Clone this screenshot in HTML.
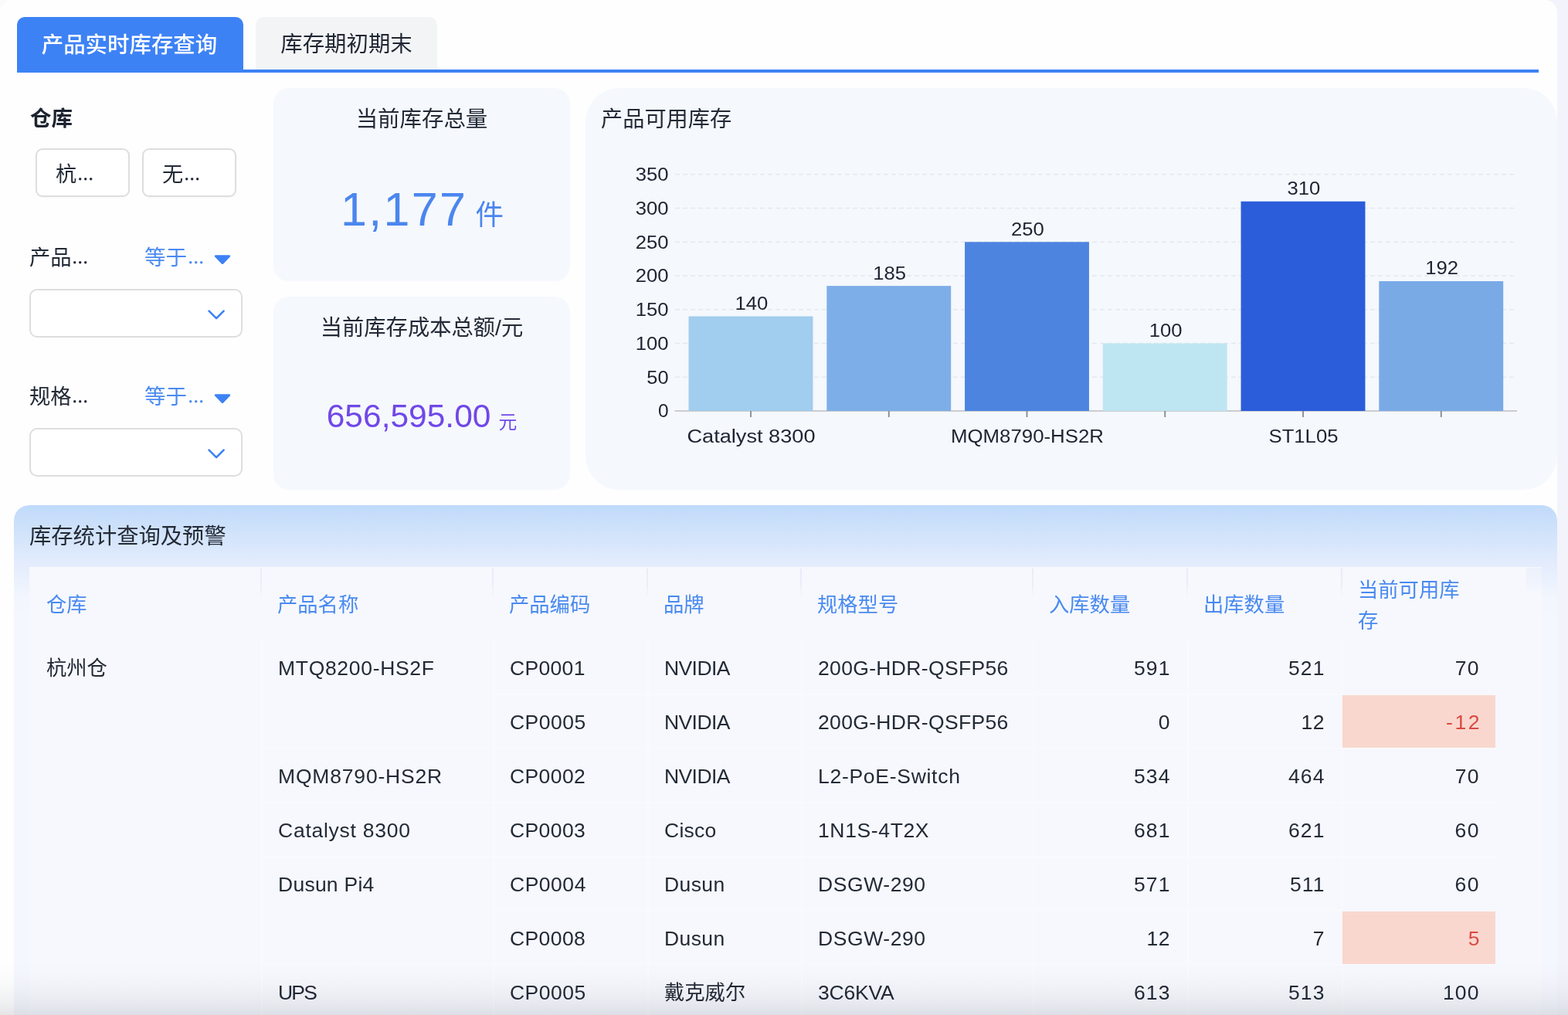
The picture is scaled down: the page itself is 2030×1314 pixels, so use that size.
<!DOCTYPE html>
<html lang="zh-CN">
<head>
<meta charset="utf-8">
<title>产品实时库存查询</title>
<style>
*{box-sizing:border-box;margin:0;padding:0}
html,body{width:2030px;height:1314px;overflow:hidden;background:#F3F4FB}
body::before{content:"";position:absolute;left:0;top:0;width:40px;height:40px;background:#FAFBFD}
body{font-family:"Liberation Sans",sans-serif;color:#1F2633;-webkit-font-smoothing:antialiased}
.page{position:absolute;left:0;top:0;width:2016px;height:1314px;background:#FEFEFF;border-radius:16px 16px 0 0;overflow:hidden;will-change:transform}
.zh{display:inline-block;vertical-align:baseline;line-height:1;white-space:nowrap;letter-spacing:0;font-family:"Liberation Sans","Noto Sans CJK SC",sans-serif;flex:none}
.tabs{position:absolute;left:0;top:0;width:2016px;height:94px}
.tab{position:absolute;top:22px;display:flex;align-items:center;justify-content:center;border-radius:10px 10px 0 0}
.tab.on{left:22px;width:293px;height:72px;background:#3D82F5;color:#fff;padding-top:1px;padding-right:2px}
.tab.off{left:331px;width:235px;height:68px;background:#F3F4F6;color:#1F2633;padding-top:2px}
.tabline{position:absolute;left:22px;top:90px;width:1970px;height:4px;background:#3D82F5}

.filters{position:absolute;left:0;top:0}
.flabel{position:absolute;line-height:28px;height:28px;white-space:nowrap;color:#1D2330}
.btn{position:absolute;top:192px;width:122px;height:63px;border:2px solid #DDDEE0;border-radius:9px;background:#fff;display:flex;align-items:center;justify-content:flex-start;padding-left:24px;padding-top:4px;white-space:nowrap;color:#232A36;box-shadow:0 1px 2px rgba(0,0,0,.03)}
.dots{display:inline-block;position:relative;fill:currentColor;vertical-align:baseline;overflow:visible}
.frow{position:absolute;left:38px;width:276px;height:30px;white-space:nowrap}
.fname{position:absolute;left:0;top:0;line-height:30px;color:#232A36}
.fop{position:absolute;left:149px;top:0;line-height:30px;color:#4A8AF0}
.caret{position:absolute;left:239px;top:9px;fill:#3D82F5}
.select{position:absolute;left:38px;width:276px;height:63px;border:2px solid #DDDEE0;border-radius:10px;background:#fff}
.chev{position:absolute;left:229px;top:24.6px;fill:none;stroke:#3D82F5;stroke-width:2.6;stroke-linecap:round;stroke-linejoin:round}

.kpi{position:absolute;left:354px;width:384px;height:250px;background:#F5F8FD;border-radius:20px}
.ktitle{position:absolute;left:0;right:0;top:26px;height:30px;line-height:30px;text-align:center;white-space:nowrap;color:#232A36}
.kval{position:absolute;left:0;right:0;white-space:nowrap;text-align:center}
.kval.blue{color:#4B86EE;top:126px;height:76px;line-height:76px;text-align:left}
.bignum{position:absolute;left:86px;top:0;fill:currentColor}
.kval.purple{color:#7048E8;top:130px;height:50px;line-height:50px}
.big{font-size:63px;letter-spacing:.9px;-webkit-text-stroke:1.1px #F5F8FD}
.mid{font-size:42.5px}

.chartcard{position:absolute;left:758px;top:114px;width:1258px;height:520px;background:#F5F8FD;border-radius:44px}
.ctitle{position:absolute;left:20px;top:26px;line-height:30px;height:30px;color:#232A36;white-space:nowrap}
.plot{position:absolute;left:0;top:0}
.plot text{font-family:"Liberation Sans",sans-serif;font-size:23.5px;fill:#1D2330}
.plot .grid{stroke:#E5E8EC;stroke-width:1.5;stroke-dasharray:6 4}
.plot .axis{stroke:#CBCCCE;stroke-width:2}
.plot .tick{stroke:#85888C;stroke-width:1.8}

.tablecard{position:absolute;left:18px;top:654px;width:1998px;height:660px;overflow:hidden;border-radius:20px 20px 0 0;background:linear-gradient(180deg,#BFDAFA 0px,#D3E4FB 40px,#E5EDFD 80px,#F2F6FD 120px,#F4F7FD 140px,#F4F7FD 100%)}
.ttitle{position:absolute;left:20px;top:26px;line-height:30px;height:30px;color:#232A36;white-space:nowrap}
.grid-tbl{position:absolute;left:20px;top:80px;width:1958px;height:580px;overflow:hidden;background:#F6F8FD}
.tr{position:relative;height:70px;width:100%}
.tr.th{height:94px;color:#4A8AF0}
.td{position:absolute;top:0;height:100%;padding:2px 22.5px 0 20px;display:flex;align-items:center;white-space:nowrap;font-size:26.5px;color:#232A36;border-left:2px solid rgba(255,255,255,.25);border-top:2px solid rgba(255,255,255,.3)}
.th .td{color:#4A8AF0;padding:4px 20px 0 19px;border-top:none;border-left-color:transparent}
.th .td::before{content:"";position:absolute;left:-3px;top:2px;width:2px;height:38px;background:linear-gradient(180deg,#E8EBF8,#EAEDF9 50%,rgba(240,243,252,0))}
.th .td.c0::before{display:none}
.td.c0{border-left:none;padding-left:22px}
.th .td.c0{padding-left:22px}
.tr .td.c0{border-top:none;padding-top:4px}
.tr.th+.tr .td,.tr.m .td.c1{border-top-color:transparent}
.tr.th .td.c0{padding-top:4px}
.td.num{justify-content:flex-end}
.td.two{display:block;padding-top:10px;line-height:40px}
.td.warn{background:#FAD7CE;color:#D94A42;border-left:none;border-top:2px solid #F6F8FD;left:1700px;width:198px;padding-right:20.5px}
.corner{position:absolute;left:1938px;top:1px;width:20px;height:32px;background:linear-gradient(180deg,#EDF1FB,#F1F4FC 60%,#F5F8FD)}
.fade{position:absolute;left:0;width:2030px;top:1244px;z-index:5;height:70px;background:linear-gradient(180deg,rgba(20,24,40,0) 0,rgba(20,24,40,.008) 25%,rgba(20,24,40,.028) 50%,rgba(20,24,40,.06) 75%,rgba(20,24,40,.105) 100%)}
.c0{left:0px;width:300px}
.c1{left:300px;width:300px}
.c2{left:600px;width:200px}
.c3{left:800px;width:199px}
.c4{left:999px;width:300px}
.c5{left:1299px;width:200px}
.c6{left:1499px;width:200px}
.c7{left:1699px;width:200px}</style>
</head>
<body>

<div class="page">
  <div class="tabs">
    <div class="tab on"><span class="zh" style="font-size:28.45px;font-weight:500">产品实时库存查询</span></div>
    <div class="tab off"><span class="zh" style="font-size:28.4px">库存期初期末</span></div>
    <div class="tabline"></div>
  </div>

  <div class="filters">
    <div class="flabel" style="left:39px;top:140px"><span class="zh" style="font-size:27.5px;font-weight:bold">仓库</span></div>
    <div class="btn" style="left:46px"><span><span class="zh" style="font-size:27.2px">杭</span><svg class="dots" aria-hidden="true" width="17.4" height="3.4" viewBox="0 0 17.4 3.4" style="margin-left:2.9px;top:-1.2px"><circle cx="1.70" cy="1.7" r="1.7"/><circle cx="8.70" cy="1.7" r="1.7"/><circle cx="15.70" cy="1.7" r="1.7"/></svg></span></div>
    <div class="btn" style="left:184px"><span><span class="zh" style="font-size:27.2px">无</span><svg class="dots" aria-hidden="true" width="17.4" height="3.4" viewBox="0 0 17.4 3.4" style="margin-left:2.9px;top:-1.2px"><circle cx="1.70" cy="1.7" r="1.7"/><circle cx="8.70" cy="1.7" r="1.7"/><circle cx="15.70" cy="1.7" r="1.7"/></svg></span></div>

    <div class="frow" style="top:320px">
      <div class="fname"><span class="zh" style="font-size:27.3px">产品</span><svg class="dots" aria-hidden="true" width="17.4" height="3.4" viewBox="0 0 17.4 3.4" style="margin-left:2.9px;top:-1.2px"><circle cx="1.70" cy="1.7" r="1.7"/><circle cx="8.70" cy="1.7" r="1.7"/><circle cx="15.70" cy="1.7" r="1.7"/></svg></div>
      <div class="fop"><span class="zh" style="font-size:27.6px">等于</span><svg class="dots" aria-hidden="true" width="17.4" height="3.4" viewBox="0 0 17.4 3.4" style="margin-left:2.9px;top:-1.2px"><circle cx="1.70" cy="1.7" r="1.7"/><circle cx="8.70" cy="1.7" r="1.7"/><circle cx="15.70" cy="1.7" r="1.7"/></svg></div>
      <svg class="caret" width="22" height="14" viewBox="0 0 22 14"><path d="M2.2 1.2h17.6a1.4 1.4 0 0 1 1 2.4l-8.6 8.8a1.7 1.7 0 0 1-2.4 0L1.2 3.6a1.4 1.4 0 0 1 1-2.4z"/></svg>
    </div>
    <div class="select" style="top:374px"><svg class="chev" width="24" height="15" viewBox="0 0 24 15"><path d="M1.6 1.6l9.5 9.5l9.5 -9.5"/></svg></div>

    <div class="frow" style="top:500px">
      <div class="fname"><span class="zh" style="font-size:27.3px">规格</span><svg class="dots" aria-hidden="true" width="17.4" height="3.4" viewBox="0 0 17.4 3.4" style="margin-left:2.9px;top:-1.2px"><circle cx="1.70" cy="1.7" r="1.7"/><circle cx="8.70" cy="1.7" r="1.7"/><circle cx="15.70" cy="1.7" r="1.7"/></svg></div>
      <div class="fop"><span class="zh" style="font-size:27.6px">等于</span><svg class="dots" aria-hidden="true" width="17.4" height="3.4" viewBox="0 0 17.4 3.4" style="margin-left:2.9px;top:-1.2px"><circle cx="1.70" cy="1.7" r="1.7"/><circle cx="8.70" cy="1.7" r="1.7"/><circle cx="15.70" cy="1.7" r="1.7"/></svg></div>
      <svg class="caret" width="22" height="14" viewBox="0 0 22 14"><path d="M2.2 1.2h17.6a1.4 1.4 0 0 1 1 2.4l-8.6 8.8a1.7 1.7 0 0 1-2.4 0L1.2 3.6a1.4 1.4 0 0 1 1-2.4z"/></svg>
    </div>
    <div class="select" style="top:554px"><svg class="chev" width="24" height="15" viewBox="0 0 24 15"><path d="M1.6 1.6l9.5 9.5l9.5 -9.5"/></svg></div>
  </div>

  <div class="kpi" style="top:114px">
    <div class="ktitle"><span class="zh" style="font-size:28.45px">当前库存总量</span></div>
    <div class="kval blue"><svg class="bignum" role="img" aria-label="1,177" width="170" height="70" viewBox="440 240 170 70"><text x="441" y="291.8" font-family="'Liberation Sans',sans-serif" font-size="61" fill="currentColor" textLength="162" lengthAdjust="spacing">1,177</text></svg><span class="zh" style="font-size:36.5px;position:absolute;left:261.5px;top:20.5px">件</span></div>
  </div>
  <div class="kpi" style="top:384px">
    <div class="ktitle"><span class="zh" style="font-size:28.3px">当前库存成本总额/元</span></div>
    <div class="kval purple"><span class="mid">656,595.00</span><span class="zh" style="font-size:23.8px;margin-left:10px;position:relative;top:1.5px">元</span></div>
  </div>

  <div class="chartcard">
    <div class="ctitle"><span class="zh" style="font-size:28.2px">产品可用库存</span></div>
    <svg class="plot" width="1258" height="520" viewBox="758 114 1258 520">
<line x1="874" x2="1962" y1="488.25" y2="488.25" class="grid"/>
<line x1="874" x2="1962" y1="444.50" y2="444.50" class="grid"/>
<line x1="874" x2="1962" y1="400.75" y2="400.75" class="grid"/>
<line x1="874" x2="1962" y1="357.00" y2="357.00" class="grid"/>
<line x1="874" x2="1962" y1="313.25" y2="313.25" class="grid"/>
<line x1="874" x2="1962" y1="269.50" y2="269.50" class="grid"/>
<line x1="874" x2="1962" y1="225.75" y2="225.75" class="grid"/>
<line x1="873.5" x2="1964" y1="532.0" y2="532.0" class="axis"/>
<rect x="891.55" y="409.50" width="160.90" height="122.50" fill="#A1CDEE"/>
<rect x="1070.30" y="370.12" width="160.90" height="161.88" fill="#7EAEE8"/>
<rect x="1249.05" y="313.25" width="160.90" height="218.75" fill="#4D84E0"/>
<rect x="1427.80" y="444.50" width="160.90" height="87.50" fill="#BEE6F2"/>
<rect x="1606.55" y="260.75" width="160.90" height="271.25" fill="#2B5CDA"/>
<rect x="1785.30" y="364.00" width="160.90" height="168.00" fill="#79AAE6"/>
<line x1="972.00" x2="972.00" y1="532.0" y2="540.0" class="tick"/>
<line x1="1150.75" x2="1150.75" y1="532.0" y2="540.0" class="tick"/>
<line x1="1329.50" x2="1329.50" y1="532.0" y2="540.0" class="tick"/>
<line x1="1508.25" x2="1508.25" y1="532.0" y2="540.0" class="tick"/>
<line x1="1687.00" x2="1687.00" y1="532.0" y2="540.0" class="tick"/>
<line x1="1865.75" x2="1865.75" y1="532.0" y2="540.0" class="tick"/>
<text x="865.5" y="540.40" text-anchor="end" textLength="13.6" lengthAdjust="spacingAndGlyphs">0</text>
<text x="865.5" y="496.65" text-anchor="end" textLength="28.2" lengthAdjust="spacingAndGlyphs">50</text>
<text x="865.5" y="452.90" text-anchor="end" textLength="42.8" lengthAdjust="spacingAndGlyphs">100</text>
<text x="865.5" y="409.15" text-anchor="end" textLength="42.8" lengthAdjust="spacingAndGlyphs">150</text>
<text x="865.5" y="365.40" text-anchor="end" textLength="42.8" lengthAdjust="spacingAndGlyphs">200</text>
<text x="865.5" y="321.65" text-anchor="end" textLength="42.8" lengthAdjust="spacingAndGlyphs">250</text>
<text x="865.5" y="277.90" text-anchor="end" textLength="42.8" lengthAdjust="spacingAndGlyphs">300</text>
<text x="865.5" y="234.15" text-anchor="end" textLength="42.8" lengthAdjust="spacingAndGlyphs">350</text>
<text x="972.80" y="400.90" text-anchor="middle" textLength="42.8" lengthAdjust="spacingAndGlyphs">140</text>
<text x="1151.55" y="361.52" text-anchor="middle" textLength="42.8" lengthAdjust="spacingAndGlyphs">185</text>
<text x="1330.30" y="304.65" text-anchor="middle" textLength="42.8" lengthAdjust="spacingAndGlyphs">250</text>
<text x="1509.05" y="435.90" text-anchor="middle" textLength="42.8" lengthAdjust="spacingAndGlyphs">100</text>
<text x="1687.80" y="252.15" text-anchor="middle" textLength="42.8" lengthAdjust="spacingAndGlyphs">310</text>
<text x="1866.55" y="355.40" text-anchor="middle" textLength="42.8" lengthAdjust="spacingAndGlyphs">192</text>
<text x="972.50" y="572.8" text-anchor="middle" textLength="166" lengthAdjust="spacingAndGlyphs">Catalyst 8300</text>
<text x="1330.00" y="572.8" text-anchor="middle" textLength="198" lengthAdjust="spacingAndGlyphs">MQM8790-HS2R</text>
<text x="1687.50" y="572.8" text-anchor="middle" textLength="90" lengthAdjust="spacingAndGlyphs">ST1L05</text>
</svg>
  </div>

  <div class="tablecard">
    <div class="ttitle"><span class="zh" style="font-size:28.3px">库存统计查询及预警</span></div>
    <div class="grid-tbl">
<div class="corner"></div>
<div class="tr th">
<div class="td c0"><span class="zh h" style="font-size:26.3px">仓库</span></div>
<div class="td c1"><span class="zh h" style="font-size:26.3px">产品名称</span></div>
<div class="td c2"><span class="zh h" style="font-size:26.3px">产品编码</span></div>
<div class="td c3"><span class="zh h" style="font-size:26.3px">品牌</span></div>
<div class="td c4"><span class="zh h" style="font-size:26.3px">规格型号</span></div>
<div class="td c5"><span class="zh h" style="font-size:26.3px">入库数量</span></div>
<div class="td c6"><span class="zh h" style="font-size:26.3px">出库数量</span></div>
<div class="td c7 two"><span class="zh h" style="font-size:26.3px">当前可用库</span><br><span class="zh h" style="font-size:26.3px">存</span></div>
</div>
<div class="tr">
<div class="td c0"><span class="zh" style="font-size:26.3px">杭州仓</span></div>
<div class="td c1"><span style="letter-spacing:0.69px;margin-right:-0.69px">MTQ8200-HS2F</span></div>
<div class="td c2"><span style="letter-spacing:0.32px;margin-right:-0.32px">CP0001</span></div>
<div class="td c3"><span style="letter-spacing:-0.60px;margin-right:0.60px">NVIDIA</span></div>
<div class="td c4"><span style="letter-spacing:0.34px;margin-right:-0.34px">200G-HDR-QSFP56</span></div>
<div class="td c5 num"><span style="letter-spacing:1.15px;margin-right:-1.15px">591</span></div>
<div class="td c6 num"><span style="letter-spacing:1.15px;margin-right:-1.15px">521</span></div>
<div class="td c7 num"><span style="letter-spacing:1.30px;margin-right:-1.30px">70</span></div>
</div>
<div class="tr m">
<div class="td c0"></div>
<div class="td c1"></div>
<div class="td c2"><span style="letter-spacing:0.48px;margin-right:-0.48px">CP0005</span></div>
<div class="td c3"><span style="letter-spacing:-0.60px;margin-right:0.60px">NVIDIA</span></div>
<div class="td c4"><span style="letter-spacing:0.34px;margin-right:-0.34px">200G-HDR-QSFP56</span></div>
<div class="td c5 num"><span style="letter-spacing:0.00px;margin-right:0.00px">0</span></div>
<div class="td c6 num"><span style="letter-spacing:0.50px;margin-right:-0.50px">12</span></div>
<div class="td c7 num warn"><span style="letter-spacing:2.60px;margin-right:-2.60px">-12</span></div>
</div>
<div class="tr">
<div class="td c0"></div>
<div class="td c1"><span style="letter-spacing:0.82px;margin-right:-0.82px">MQM8790-HS2R</span></div>
<div class="td c2"><span style="letter-spacing:0.40px;margin-right:-0.40px">CP0002</span></div>
<div class="td c3"><span style="letter-spacing:-0.60px;margin-right:0.60px">NVIDIA</span></div>
<div class="td c4"><span style="letter-spacing:0.72px;margin-right:-0.72px">L2-PoE-Switch</span></div>
<div class="td c5 num"><span style="letter-spacing:1.15px;margin-right:-1.15px">534</span></div>
<div class="td c6 num"><span style="letter-spacing:1.15px;margin-right:-1.15px">464</span></div>
<div class="td c7 num"><span style="letter-spacing:1.30px;margin-right:-1.30px">70</span></div>
</div>
<div class="tr">
<div class="td c0"></div>
<div class="td c1"><span style="letter-spacing:0.75px;margin-right:-0.75px">Catalyst 8300</span></div>
<div class="td c2"><span style="letter-spacing:0.40px;margin-right:-0.40px">CP0003</span></div>
<div class="td c3"><span style="letter-spacing:0.25px;margin-right:-0.25px">Cisco</span></div>
<div class="td c4"><span style="letter-spacing:0.63px;margin-right:-0.63px">1N1S-4T2X</span></div>
<div class="td c5 num"><span style="letter-spacing:1.15px;margin-right:-1.15px">681</span></div>
<div class="td c6 num"><span style="letter-spacing:1.15px;margin-right:-1.15px">621</span></div>
<div class="td c7 num"><span style="letter-spacing:1.40px;margin-right:-1.40px">60</span></div>
</div>
<div class="tr">
<div class="td c0"></div>
<div class="td c1"><span style="letter-spacing:0.25px;margin-right:-0.25px">Dusun Pi4</span></div>
<div class="td c2"><span style="letter-spacing:0.52px;margin-right:-0.52px">CP0004</span></div>
<div class="td c3"><span style="letter-spacing:0.40px;margin-right:-0.40px">Dusun</span></div>
<div class="td c4"><span style="letter-spacing:0.57px;margin-right:-0.57px">DSGW-290</span></div>
<div class="td c5 num"><span style="letter-spacing:1.15px;margin-right:-1.15px">571</span></div>
<div class="td c6 num"><span style="letter-spacing:1.15px;margin-right:-1.15px">511</span></div>
<div class="td c7 num"><span style="letter-spacing:1.40px;margin-right:-1.40px">60</span></div>
</div>
<div class="tr m">
<div class="td c0"></div>
<div class="td c1"></div>
<div class="td c2"><span style="letter-spacing:0.40px;margin-right:-0.40px">CP0008</span></div>
<div class="td c3"><span style="letter-spacing:0.40px;margin-right:-0.40px">Dusun</span></div>
<div class="td c4"><span style="letter-spacing:0.57px;margin-right:-0.57px">DSGW-290</span></div>
<div class="td c5 num"><span style="letter-spacing:0.50px;margin-right:-0.50px">12</span></div>
<div class="td c6 num"><span style="letter-spacing:0.00px;margin-right:0.00px">7</span></div>
<div class="td c7 num warn"><span style="letter-spacing:0.00px;margin-right:0.00px">5</span></div>
</div>
<div class="tr">
<div class="td c0"></div>
<div class="td c1"><span style="letter-spacing:-1.80px;margin-right:1.80px">UPS</span></div>
<div class="td c2"><span style="letter-spacing:0.48px;margin-right:-0.48px">CP0005</span></div>
<div class="td c3"><span class="zh" style="font-size:26.3px">戴克威尔</span></div>
<div class="td c4"><span style="letter-spacing:-0.20px;margin-right:0.20px">3C6KVA</span></div>
<div class="td c5 num"><span style="letter-spacing:1.15px;margin-right:-1.15px">613</span></div>
<div class="td c6 num"><span style="letter-spacing:1.15px;margin-right:-1.15px">513</span></div>
<div class="td c7 num"><span style="letter-spacing:1.15px;margin-right:-1.15px">100</span></div>
</div>
</div>
  </div>
</div>
<div class="fade"></div>

</body>
</html>
